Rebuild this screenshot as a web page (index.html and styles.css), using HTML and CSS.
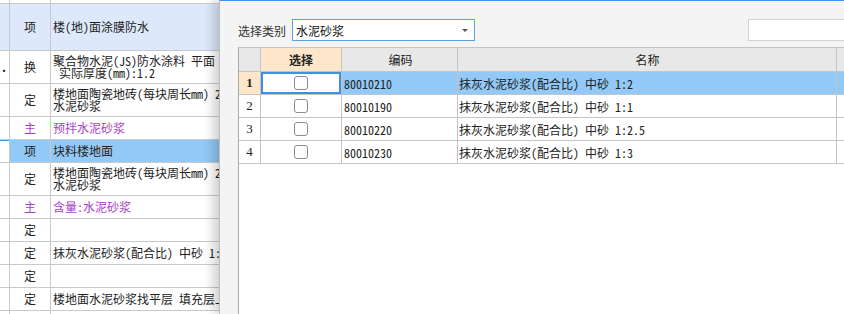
FILE: index.html
```html
<!DOCTYPE html>
<html lang="zh-CN">
<head>
<meta charset="utf-8">
<title>选择类别</title>
<link rel="stylesheet" href="styles.css">
</head>
<body>
<div class="page">
  <div class="left">
    <div class="lrow top"><div class="c1"></div><div class="c2"></div><div class="c3"></div></div>
    <div class="lrow head"><div class="c1"></div><div class="c2">项</div><div class="c3">楼(地)面涂膜防水</div></div>
    <div class="lrow dbl"><div class="c1 dot">.</div><div class="c2">换</div><div class="c3">聚合物水泥(JS)防水涂料 平面<br>&nbsp;实际厚度(mm):1.2</div></div>
    <div class="lrow dbl"><div class="c1"></div><div class="c2">定</div><div class="c3">楼地面陶瓷地砖(每块周长mm) 2400以内<br>水泥砂浆</div></div>
    <div class="lrow one main"><div class="c1"></div><div class="c2">主</div><div class="c3">预拌水泥砂浆</div></div>
    <div class="lrow one sel"><div class="c1"></div><div class="c2">项</div><div class="c3">块料楼地面</div></div>
    <div class="lrow dbl"><div class="c1"></div><div class="c2">定</div><div class="c3">楼地面陶瓷地砖(每块周长mm) 2400以内<br>水泥砂浆</div></div>
    <div class="lrow one main"><div class="c1"></div><div class="c2">主</div><div class="c3">含量:水泥砂浆</div></div>
    <div class="lrow one"><div class="c1"></div><div class="c2">定</div><div class="c3"></div></div>
    <div class="lrow one"><div class="c1"></div><div class="c2">定</div><div class="c3">抹灰水泥砂浆(配合比) 中砂 1:2</div></div>
    <div class="lrow one"><div class="c1"></div><div class="c2">定</div><div class="c3"></div></div>
    <div class="lrow one"><div class="c1"></div><div class="c2">定</div><div class="c3">楼地面水泥砂浆找平层 填充层上</div></div>
    <div class="lrow one"><div class="c1"></div><div class="c2"></div><div class="c3"></div></div>
  </div>

  <div class="dialog">
    <div class="toolbar">
      <span class="label">选择类别</span>
      <div class="combo">
        <span>水泥砂浆</span>
        <span class="arrow"></span>
      </div>
      <div class="search"></div>
    </div>
    <div class="grid">
      <div class="grow ghead">
        <div class="g num"></div>
        <div class="g chk hsel">选择</div>
        <div class="g code center">编码</div>
        <div class="g name center">名称</div>
        <div class="g extra"></div>
      </div>
      <div class="grow active">
        <div class="g num cur">1</div>
        <div class="g chk focus"><span class="box"></span></div>
        <div class="g code">80010210</div>
        <div class="g name">抹灰水泥砂浆(配合比) 中砂 1:2</div>
        <div class="g extra"></div>
      </div>
      <div class="grow">
        <div class="g num">2</div>
        <div class="g chk"><span class="box"></span></div>
        <div class="g code">80010190</div>
        <div class="g name">抹灰水泥砂浆(配合比) 中砂 1:1</div>
        <div class="g extra"></div>
      </div>
      <div class="grow">
        <div class="g num">3</div>
        <div class="g chk"><span class="box"></span></div>
        <div class="g code">80010220</div>
        <div class="g name">抹灰水泥砂浆(配合比) 中砂 1:2.5</div>
        <div class="g extra"></div>
      </div>
      <div class="grow">
        <div class="g num">4</div>
        <div class="g chk"><span class="box"></span></div>
        <div class="g code">80010230</div>
        <div class="g name">抹灰水泥砂浆(配合比) 中砂 1:3</div>
        <div class="g extra"></div>
      </div>
    </div>
  </div>
</div>
</body>
</html>
```

FILE: styles.css
```css
* { box-sizing: border-box; }
html, body { margin: 0; padding: 0; }
body {
  width: 844px;
  height: 314px;
  overflow: hidden;
  background: #ffffff;
  font-family: "Noto Sans Mono CJK SC", "Noto Sans CJK SC", "DejaVu Sans", sans-serif;
  font-size: 12px;
  color: #222;
}
.page {
  display: flex;
  width: 844px;
  height: 314px;
  overflow: hidden;
}

/* left table */
.left {
  width: 219px;
  flex-shrink: 0;
  overflow: hidden;
  background: #fff;
}
.lrow {
  display: grid;
  grid-template-columns: 10px 41px 400px;
  border-bottom: 1px solid #c9c9c9;
}
.lrow > div {
  border-right: 1px solid #c9c9c9;
  display: flex;
  align-items: center;
  white-space: nowrap;
  overflow: hidden;
  line-height: 12px;
}
.lrow .c2 { justify-content: center; }
.lrow .c3 { padding-left: 2px; }
.lrow.top { height: 4px; }
.lrow.head { height: 47px; }
.lrow.head > div { background: #dde9fb; }
.lrow.dbl { height: 33px; }
.lrow.one { height: 23px; }
.lrow.main > div { color: #a43fc4; }
.lrow.sel .c2, .lrow.sel .c3 { background: #92c9f6; }
.lrow.sel .c1 { box-shadow: inset 0 1px 0 #4a92e4; }
.c1.dot { font-weight: bold; padding-left: 1px; }

/* dialog */
.dialog {
  position: relative;
  flex: 1;
  display: flex;
  flex-direction: column;
  background: #f4f4f4;
  border-top: 1px solid #3d93ef;
  border-left: 1px solid #bdbdbd;
  box-shadow: -6px 0 10px rgba(0, 0, 0, 0.18);
  padding: 18px 0 0 18px;
  overflow: hidden;
}
.toolbar {
  display: flex;
  align-items: center;
  height: 22px;
}
.label { color: #333; margin-right: 6px; }
.combo {
  width: 183px;
  height: 22px;
  border: 1px solid #5b9fea;
  background: #fff;
  display: flex;
  align-items: center;
  justify-content: space-between;
  padding: 0 6px 0 3px;
  color: #111;
}
.arrow {
  width: 0;
  height: 0;
  border-left: 3px solid transparent;
  border-right: 3px solid transparent;
  border-top: 3px solid #555;
}
.search {
  margin-left: auto;
  width: 96px;
  height: 22px;
  background: #fff;
  border: 1px solid #d4d4d4;
  border-right: none;
}

.grid {
  flex: 1;
  margin-top: 6px;
  background: #fff;
  border-top: 1px solid #c4c4c4;
  border-left: 1px solid #a9a9a9;
}
.grow {
  display: flex;
  height: 23px;
  border-bottom: 1px solid #c4c4c4;
}
.grow.ghead { height: 24px; background: #e8e8e8; }
.g {
  border-right: 1px solid #c4c4c4;
  display: flex;
  align-items: center;
  white-space: nowrap;
  overflow: hidden;
  flex-shrink: 0;
}
.g.num { width: 22px; justify-content: center; font-family: "Liberation Serif", "DejaVu Serif", serif; font-size: 13px; }
.g.chk { width: 81px; justify-content: center; }
.g.code { width: 116px; padding-left: 2px; }
.g.name { width: 379px; padding-left: 1px; }
.g.center { justify-content: center; }
.g.extra { width: 20px; border-right: none; }
.g.hsel { background: #fde6c9; font-weight: bold; }
.g.num.cur { background: #fde6c9; font-weight: bold; }
.grow.active .code, .grow.active .name, .grow.active .extra { background: #92c9f6; }
.g.focus { box-shadow: inset 0 0 0 2px #3f8fe6; }
.box {
  width: 14px;
  height: 14px;
  border: 1px solid #8c8c8c;
  border-radius: 3px;
  background: #fff;
}
```
